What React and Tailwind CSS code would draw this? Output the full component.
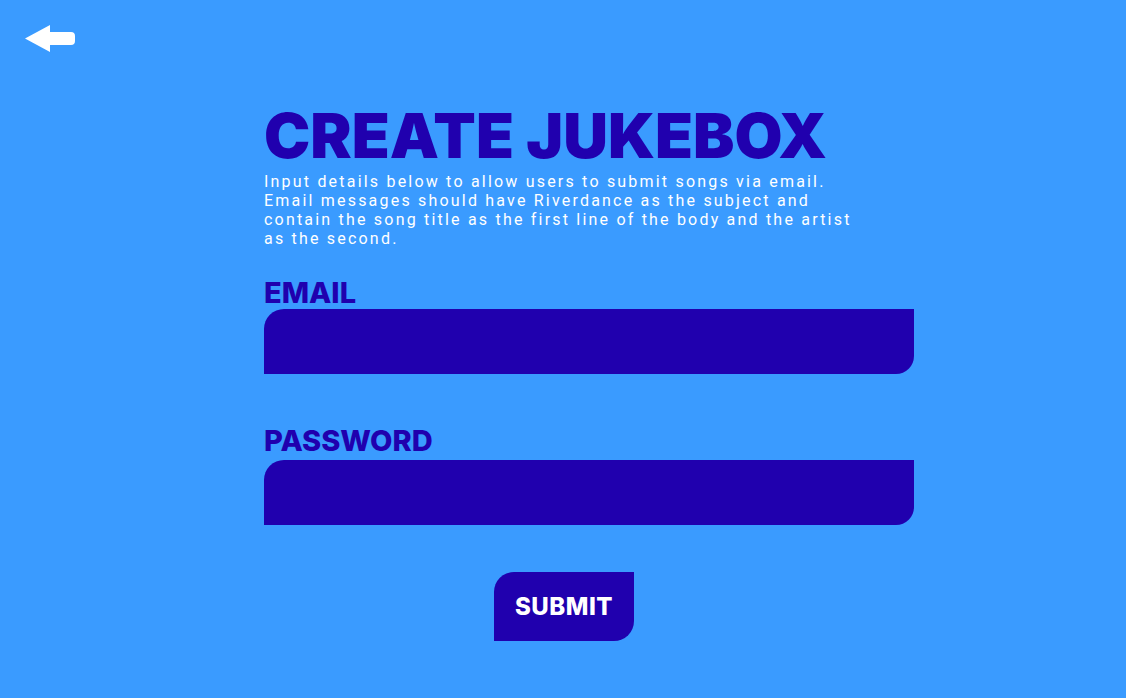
import React from "react";

export default function App() {
  return (
    <div className="w-[1126px] h-[698px] bg-[#3a9bff] relative overflow-hidden font-['Inter',sans-serif]">
      <div className="absolute left-[25px] top-[25px]">
        <svg width="51" height="28" viewBox="0 0 51 28">
          <path d="M0 13.5 L25 0 L25 7 L46 7 Q50 7 50 11 L50 16 Q50 20 46 20 L25 20 L25 27 Z" fill="#fff" />
        </svg>
      </div>
      <div className="pl-[264px] pt-[106px] flex flex-col">
        <h1 className="text-[62px] leading-[60px] font-black text-[#2000ae] tracking-[0px] h-[64px] font-['Inter',sans-serif]">CREATE JUKEBOX</h1>
        <p className="text-white text-[16px] leading-[19px] tracking-[2.2px] w-[602px] mt-[2px] font-['Roboto',sans-serif]">
          Input details below to allow users to submit songs via email. Email messages should have Riverdance as the subject and contain the song title as the first line of the body and the artist as the second.
        </p>
        <label className="mt-[29px] text-[29px] leading-[32px] font-extrabold text-[#2000ae]">EMAIL</label>
        <div className="w-[650px] h-[65px] bg-[#2000ae] rounded-tl-[20px] rounded-br-[18px]"></div>
        <label className="mt-[48px] text-[29px] leading-[38px] font-extrabold text-[#2000ae]">PASSWORD</label>
        <div className="w-[650px] h-[65px] bg-[#2000ae] rounded-tl-[20px] rounded-br-[18px]"></div>
        <div className="w-[650px] flex mt-[47px] pl-[230px]">
          <button className="w-[140px] h-[69px] bg-[#2000ae] rounded-tl-[20px] rounded-br-[20px] text-white text-[24px] font-extrabold tracking-[0.5px]">SUBMIT</button>
        </div>
      </div>
    </div>
  );
}
